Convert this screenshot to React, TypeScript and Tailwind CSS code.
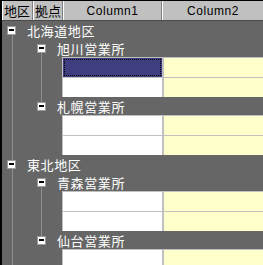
import React from 'react'

interface Office {
    name: string
    rows: number
}

interface Region {
    name: string
    offices: Office[]
}

const regions: Region[] = [
    { name: '北海道地区', offices: [{ name: '旭川営業所', rows: 2 }, { name: '札幌営業所', rows: 2 }] },
    { name: '東北地区', offices: [{ name: '青森営業所', rows: 2 }, { name: '仙台営業所', rows: 2 }] },
]

const jp = { fontFamily: '"Noto Sans CJK JP", "Liberation Sans", sans-serif' }

function MinusBox() {
    return (
        <div className="relative z-10 flex h-[9px] w-[9px] shrink-0 items-center justify-center border border-[#9a9a9a] bg-white">
            <div className="h-[2px] w-[5px] bg-black" />
        </div>
    )
}

function DataRow({ selected }: { selected?: boolean }) {
    return (
        <div className="flex h-[20px] pl-[60px]">
            <div className="flex w-[100px] border-t border-l border-[#c0c0c0] bg-white">
                {selected && (
                    <div className="flex-1 bg-[#3e3e80] p-[1px]">
                        <div className="h-full w-full border border-dotted border-black" />
                    </div>
                )}
            </div>
            <div className="flex-1 border-t border-l-2 border-[#c0c0c0] bg-[#ffffcc]" />
        </div>
    )
}

export default function App() {
    return (
        <div className="h-[265px] w-[263px] overflow-hidden border-l-2 border-black bg-[#666666]">
            {/* Header */}
            <div className="flex h-[21px] border-t border-b border-t-black border-b-[#4a4a4a] bg-[#c0c0c0] text-black">
                <div className="flex w-[31px] items-center whitespace-nowrap border-l border-r border-l-white border-r-[#808080] pl-[1px] text-[13px]" style={jp}>
                    地区
                </div>
                <div className="flex w-[30px] items-center whitespace-nowrap border-l border-r border-l-white border-r-[#808080] pl-[1px] text-[13px]" style={jp}>
                    拠点
                </div>
                <div className="flex w-[99px] items-center justify-center border-l border-r border-l-white border-r-[#808080] font-['Liberation_Sans'] text-[12px] tracking-[0.6px]">
                    Column1
                </div>
                <div className="flex flex-1 items-center justify-center border-l border-l-white font-['Liberation_Sans'] text-[12px] tracking-[0.6px]">
                    Column2
                </div>
            </div>

            {/* Tree body */}
            <div className="relative text-[13px] text-white" style={jp}>
                <div className="absolute top-[9px] bottom-0 left-[10px] w-px bg-[#8e8e8e]" />
                {regions.map((region, ri) => (
                    <div key={region.name}>
                        <div className="flex h-[18px] items-center pl-[5px]">
                            <MinusBox />
                            <span className="ml-[11px] whitespace-nowrap leading-none tracking-[0.6px]">{region.name}</span>
                        </div>
                        <div className="relative">
                            <div className="absolute top-[9px] left-[39px] h-[58px] w-px bg-[#8e8e8e]" />
                            {region.offices.map((office, oi) => (
                                <div key={office.name}>
                                    <div className="flex h-[18px] items-center pl-[35px]">
                                        <MinusBox />
                                        <span className="ml-[11px] whitespace-nowrap leading-none tracking-[0.6px]">{office.name}</span>
                                    </div>
                                    {Array.from({ length: office.rows }).map((_, i) => (
                                        <DataRow key={i} selected={ri === 0 && oi === 0 && i === 0} />
                                    ))}
                                </div>
                            ))}
                        </div>
                    </div>
                ))}
            </div>
        </div>
    )
}
